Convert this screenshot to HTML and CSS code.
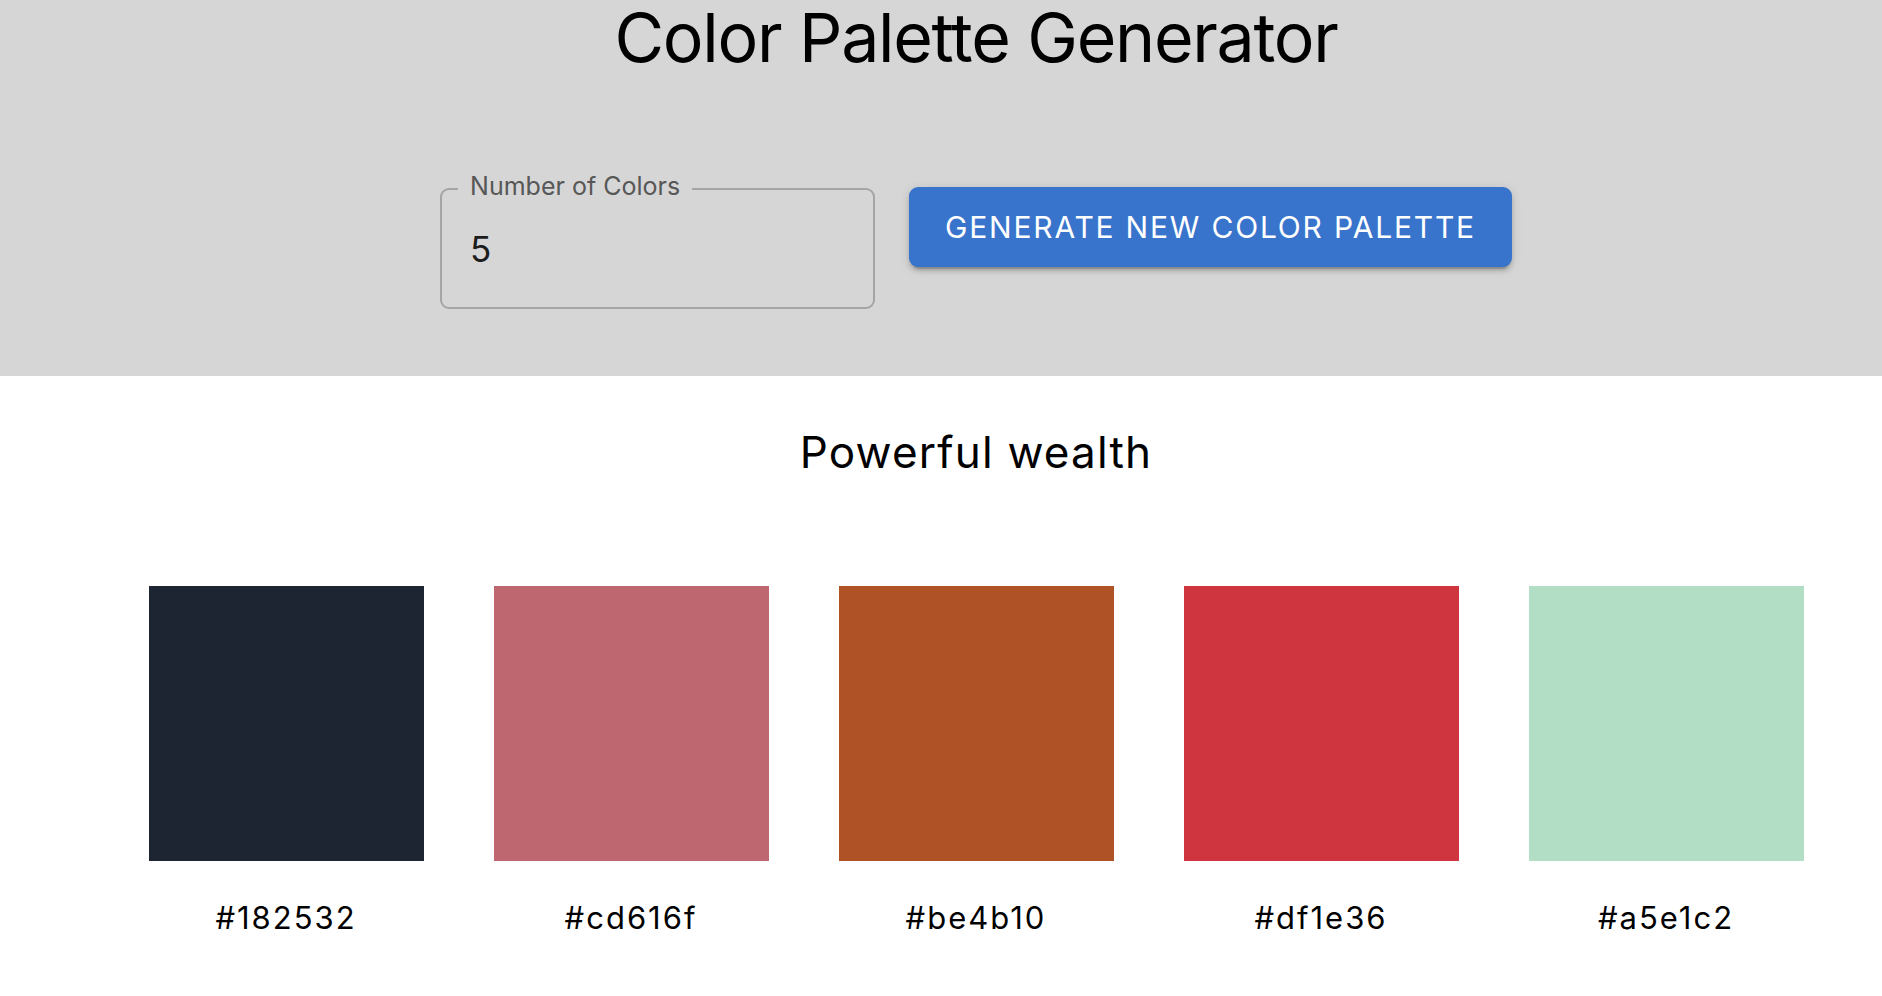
FILE: index.html
```html
<!DOCTYPE html>
<html lang="en">
<head>
<meta charset="utf-8">
<title>Color Palette Generator</title>
<link rel="stylesheet" href="styles.css">
</head>
<body>
<header class="header">
  <h1 class="title">Color Palette Generator</h1>
  <div class="controls">
    <div class="field">
      <span class="field-label">Number of Colors</span>
      <span class="field-value">5</span>
    </div>
    <button class="generate-btn" type="button">Generate New Color Palette</button>
  </div>
</header>
<main class="main">
  <h2 class="palette-name">Powerful wealth</h2>
  <div class="swatches">
    <div class="swatch-item">
      <div class="swatch swatch-1"></div>
      <div class="hex">#182532</div>
    </div>
    <div class="swatch-item">
      <div class="swatch swatch-2"></div>
      <div class="hex">#cd616f</div>
    </div>
    <div class="swatch-item">
      <div class="swatch swatch-3"></div>
      <div class="hex">#be4b10</div>
    </div>
    <div class="swatch-item">
      <div class="swatch swatch-4"></div>
      <div class="hex">#df1e36</div>
    </div>
    <div class="swatch-item">
      <div class="swatch swatch-5"></div>
      <div class="hex">#a5e1c2</div>
    </div>
  </div>
</main>
</body>
</html>
```

FILE: styles.css
```css
html, body {
  margin: 0;
  padding: 0;
  background: #ffffff;
}

body {
  font-family: Inter, "Noto Sans", "Liberation Sans", sans-serif;
  color: #000;
  overflow: hidden;
}

.header {
  background: #d6d6d6;
  height: 376px;
  padding-left: 70px;
  box-sizing: border-box;
}

.title {
  margin: 0;
  font-size: 68px;
  line-height: 74px;
  font-weight: 400;
  text-align: center;
  letter-spacing: -1.3px;
}

.controls {
  margin-top: 114px;
  display: flex;
  justify-content: center;
  align-items: flex-start;
  gap: 34px;
}

.field {
  position: relative;
  width: 435px;
  height: 121px;
  box-sizing: border-box;
  border: 2px solid #a5a5a5;
  border-radius: 9px;
  padding: 0 28px;
  display: flex;
  align-items: center;
}

.field-label {
  position: absolute;
  left: 16px;
  top: -17px;
  padding: 0 12px;
  background: #d6d6d6;
  font-size: 25px;
  line-height: 26px;
  color: #575757;
}

.field-value {
  font-size: 35px;
  line-height: 35px;
  color: #1c1c1c;
  margin-top: 1px;
}

.generate-btn {
  margin-top: -1px;
  height: 80px;
  padding: 0 36px;
  border: none;
  border-radius: 9px;
  background: #3874cb;
  color: #ffffff;
  font-family: inherit;
  font-size: 30px;
  font-weight: 400;
  letter-spacing: 1.8px;
  text-transform: uppercase;
  box-shadow: 0 6px 2px -4px rgba(0,0,0,0.2), 0 4px 4px 0 rgba(0,0,0,0.14), 0 2px 11px 0 rgba(0,0,0,0.12);
}

.main {
  padding-left: 70px;
}

.palette-name {
  margin: 50px 0 0;
  font-size: 44px;
  line-height: 52px;
  font-weight: 400;
  text-align: center;
  letter-spacing: 1.2px;
}

.swatches {
  margin-top: 108px;
  display: flex;
  justify-content: center;
  gap: 70px;
}

.swatch-item {
  display: flex;
  flex-direction: column;
  align-items: center;
}

.swatch {
  width: 275px;
  height: 275px;
}

.swatch-1 { background: #1c2531; }
.swatch-2 { background: #bf6770; }
.swatch-3 { background: #af5225; }
.swatch-4 { background: #ce353f; }
.swatch-5 { background: #b2dec5; }

.hex {
  margin-top: 39px;
  font-size: 31px;
  line-height: 36px;
  letter-spacing: 2px;
}
```
